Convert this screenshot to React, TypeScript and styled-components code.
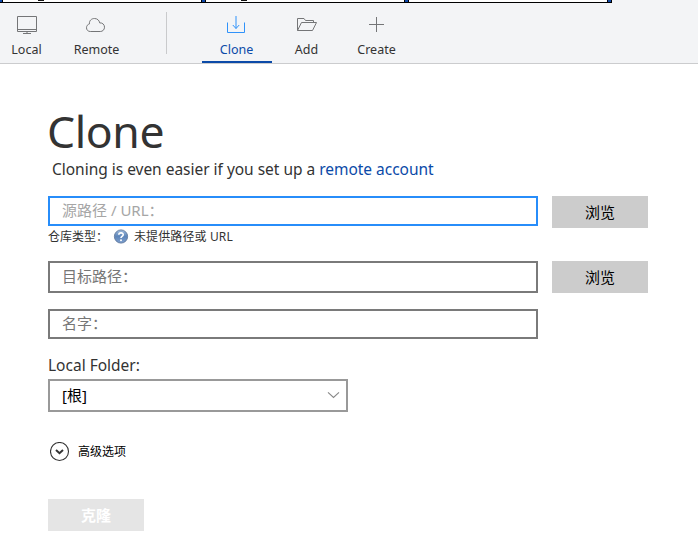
import React from "react";
import styled, { createGlobalStyle } from "styled-components";

const Global = createGlobalStyle`
  *, *::before, *::after { box-sizing: border-box; }
  html, body, #root { height: 100%; }
  body {
    margin: 0;
    overflow: hidden;
    background: #fff;
    color: #333;
    font-family: "Noto Sans", "Noto Sans CJK SC", sans-serif;
  }
  input, button { font-family: inherit; }
`;

const Page = styled.div`
  width: 698px;
  height: 541px;
  display: flex;
  flex-direction: column;
  background: #fff;
  overflow: hidden;
`;

const Header = styled.header`
  height: 64px;
  flex: none;
  background: #f3f4f6;
  border-bottom: 1px solid #cbccce;
`;

const WindowEdge = styled.div`
  display: flex;
  width: 612px;
  height: 3px;
  background: #fff;
  border-bottom: 1px solid #000;
`;

const EdgeCell = styled.div<{ $width: number }>`
  width: ${(p) => p.$width}px;
  padding-left: 35px;
`;

const EdgeMark = styled.div`
  width: 6px;
  height: 1px;
  background: #111;
`;

const EdgeDivider = styled.div<{ $first?: boolean }>`
  width: ${(p) => (p.$first ? 3 : 5)}px;
  background: #0d47a9;
  border: solid #000;
  border-width: ${(p) => (p.$first ? "0 1px 0 0" : "0 1px")};
`;

const Toolbar = styled.nav`
  display: flex;
  height: 60px;
  margin-left: -8px;
`;

const Tab = styled.div<{ $active?: boolean }>`
  width: 70px;
  display: flex;
  flex-direction: column;
  align-items: center;
  padding-top: 10px;
  border-bottom: 2px solid ${(p) => (p.$active ? "#0b4aa8" : "transparent")};
  color: ${(p) => (p.$active ? "#0b4aa8" : "#333")};

  svg {
    display: block;
    width: 24px;
    height: 24px;
    stroke: ${(p) => (p.$active ? "#2f92fa" : "#747577")};
    fill: none;
  }
`;

const TabLabel = styled.span`
  margin: 4px 1px 0 0;
  font-size: 12.5px;
  line-height: 18px;
  white-space: nowrap;
`;

const Separator = styled.div`
  width: 1px;
  height: 42px;
  margin: 9px 35px 0 34px;
  background: #c9cacc;
`;

const Content = styled.main`
  padding: 37px 0 0 48px;
  display: flex;
  flex-direction: column;
  align-items: flex-start;
`;

const Title = styled.h1`
  margin: 0 0 0 -1px;
  font-size: 44.5px;
  font-weight: 400;
  line-height: 60px;
  letter-spacing: -0.4px;
`;

const Intro = styled.p`
  margin: -3px 0 0 4px;
  height: 22px;
  font-size: 15.5px;
  line-height: 22px;
  letter-spacing: -0.02px;
  white-space: nowrap;
`;

const Link = styled.a`
  color: #0b4aa8;
`;

const Row = styled.div<{ $top: number }>`
  display: flex;
  align-items: flex-start;
  gap: 14px;
  margin-top: ${(p) => p.$top}px;
`;

const Field = styled.input<{ $focused?: boolean; $height: number }>`
  width: 490px;
  height: ${(p) => p.$height}px;
  padding: 0 12px 2px;
  border: 2px solid ${(p) => (p.$focused ? "#278dfa" : "#7a7a7a")};
  border-radius: 0;
  outline: none;
  background: #fff;
  font-size: 15px;

  &::placeholder {
    color: ${(p) => (p.$focused ? "#a6a6a6" : "#767676")};
    opacity: 1;
  }
`;

const Button = styled.button<{ $muted?: boolean }>`
  width: 96px;
  height: 32px;
  padding: 0 0 1px;
  border: 0;
  background: ${(p) => (p.$muted ? "#e5e5e5" : "#ccc")};
  color: ${(p) => (p.$muted ? "#fff" : "#000")};
  font-size: 15px;
  font-weight: ${(p) => (p.$muted ? 700 : 400)};
`;

const TypeLine = styled.div`
  display: flex;
  align-items: center;
  height: 17px;
  padding-top: 1px;
  font-size: 12px;
  line-height: 16px;
  white-space: nowrap;

  svg { display: block; margin-right: 5px; }
`;

const TypeName = styled.span`
  width: 65px;
`;

const TypeValue = styled.span`
  letter-spacing: 0.12px;
`;

const FolderLabel = styled.label`
  margin-top: 15px;
  font-size: 15.5px;
  line-height: 22px;
  height: 22px;
`;

const Select = styled.div`
  width: 300px;
  height: 33px;
  margin-top: 3px;
  padding: 0 6px 2px 12px;
  display: flex;
  align-items: center;
  justify-content: space-between;
  border: 2px solid #999;
  color: #000;
  font-size: 15px;
`;

const Advanced = styled.div`
  display: flex;
  align-items: center;
  gap: 8px;
  height: 20px;
  margin: 30px 0 37px 2px;
  color: #000;
  font-size: 12px;
  line-height: 18px;

  span { margin-top: -1px; }
`;

const MonitorIcon = () => (
  <svg viewBox="0 0 24 24">
    <path d="M2.5 3.5h19v15h-19zM2.5 16.5h19M12 18.500v2M8 20.500h8" />
  </svg>
);

const CloudIcon = () => (
  <svg viewBox="0 0 24 24">
    <path d="M5.300 18.500C3 18.500 1.500 16.900 1.500 14.800C1.500 12.900 2.700 11.300 4.500 10.900C4 7.700 6.500 5.500 9.400 5.500C12.300 5.500 14.300 7.300 14.700 9.900C17.600 9.600 19.500 11.700 19.500 14.200C19.500 16.700 17.700 18.500 15.300 18.500Z" />
  </svg>
);

const DownloadIcon = () => (
  <svg viewBox="0 0 24 24">
    <path d="M2.500 9.500V19.500H19.500V9.500M11 3V15.500M7.800 12L11 15.500L14.200 12" />
  </svg>
);

const FolderIcon = () => (
  <svg viewBox="0 0 24 24">
    <path d="M2.500 17.500V5.500H9L10.500 7.500H18.500V9.500M2.500 17.500H17.500L21.500 9.500H6.500L2.500 17.500" />
  </svg>
);

const PlusIcon = () => (
  <svg viewBox="0 0 24 24">
    <path d="M4 11.500H19M11.500 4V19" />
  </svg>
);

const HelpIcon = () => (
  <svg width="16" height="16" viewBox="0 0 16 16">
    <defs>
      <linearGradient id="help" x1="0" y1="0" x2="0" y2="1">
        <stop offset="0" stopColor="#9dbbdd" />
        <stop offset="0.5" stopColor="#5e86ba" />
        <stop offset="1" stopColor="#7d9fce" />
      </linearGradient>
    </defs>
    <circle cx="8" cy="7.500" r="6.600" fill="url(#help)" stroke="#60789c" strokeWidth="0.900" />
    <path d="M5.800 5.800C5.900 3.100 10.400 3.300 10.200 5.800C10.100 7.400 8 7.400 8 8.900" fill="none" stroke="#fff" strokeWidth="1.600" />
    <circle cx="8" cy="11.200" r="1" fill="#fff" />
  </svg>
);

const Chevron = () => (
  <svg width="13" height="8" viewBox="0 0 13 8">
    <path d="M1 1.300L6.500 6.500L12 1.300" fill="none" stroke="#888" strokeWidth="1.100" />
  </svg>
);

const ExpandIcon = () => (
  <svg width="20" height="20" viewBox="0 0 20 20" fill="none" stroke="#333">
    <circle cx="9.500" cy="9.500" r="9" strokeWidth="1.100" />
    <path d="M6 8L9.500 11.200L13 8" strokeWidth="2" />
  </svg>
);

export default function App() {
  return (
    <Page>
      <Global />
      <Header>
        <WindowEdge>
          <EdgeDivider $first />
          <EdgeCell $width={198}><EdgeMark /></EdgeCell>
          <EdgeDivider />
          <EdgeCell $width={198}><EdgeMark /></EdgeCell>
          <EdgeDivider />
          <EdgeCell $width={198} />
          <EdgeDivider />
        </WindowEdge>
        <Toolbar>
          <Tab><MonitorIcon /><TabLabel>Local</TabLabel></Tab>
          <Tab><CloudIcon /><TabLabel>Remote</TabLabel></Tab>
          <Separator />
          <Tab $active><DownloadIcon /><TabLabel>Clone</TabLabel></Tab>
          <Tab><FolderIcon /><TabLabel>Add</TabLabel></Tab>
          <Tab><PlusIcon /><TabLabel>Create</TabLabel></Tab>
        </Toolbar>
      </Header>
      <Content>
        <Title>Clone</Title>
        <Intro>
          Cloning is even easier if you set up a <Link>remote account</Link>
        </Intro>
        <Row $top={16}>
          <Field $focused $height={30} placeholder="源路径 / URL：" />
          <Button>浏览</Button>
        </Row>
        <TypeLine>
          <TypeName>仓库类型：</TypeName>
          <HelpIcon />
          <TypeValue>未提供路径或 URL</TypeValue>
        </TypeLine>
        <Row $top={16}>
          <Field $height={32} placeholder="目标路径：" />
          <Button>浏览</Button>
        </Row>
        <Row $top={16}>
          <Field $height={30} placeholder="名字：" />
        </Row>
        <FolderLabel>Local Folder:</FolderLabel>
        <Select>
          <span>[根]</span>
          <Chevron />
        </Select>
        <Advanced>
          <ExpandIcon />
          <span>高级选项</span>
        </Advanced>
        <Button $muted>克隆</Button>
      </Content>
    </Page>
  );
}
